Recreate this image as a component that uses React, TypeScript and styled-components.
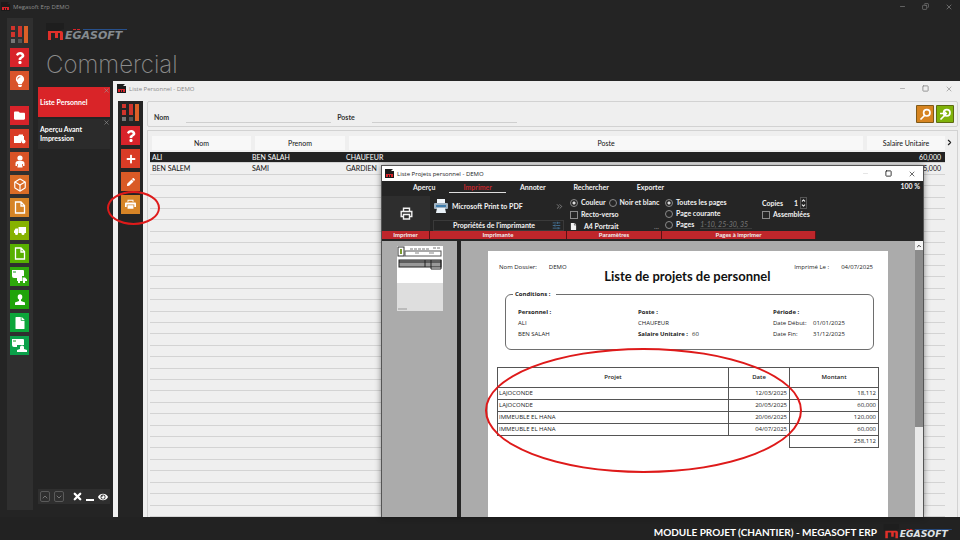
import React from "react";
import styled, { createGlobalStyle, css } from "styled-components";
import { FaQuestion, FaLightbulb, FaFile, FaPlus, FaPen, FaFolder, FaEye } from "react-icons/fa";
import { Box, ChevronDown, ChevronUp, ChevronRight, ChevronsRight, Minus, Square, X, Copy, SlidersHorizontal } from "lucide-react";

const Global = createGlobalStyle`
  * { box-sizing: border-box; }
  body { margin: 0; background: #242424; font-family: "Open Sans", "Noto Sans", sans-serif; }
  button, input { font: inherit; color: inherit; margin: 0; padding: 0; border: 0; background: none; }
  svg { display: block; flex: none; }
  h1, h2, p { margin: 0; }
`;

/* ---------- shell ---------- */
const Shell = styled.div`
  height: 100vh;
  display: grid;
  grid-template-rows: 13px minmax(0, 1fr) 23px;
  overflow: hidden;
  background: #242424;
`;
const TitleBar = styled.header<{ $tone: "dark" | "pale" | "white" }>`
  display: flex;
  align-items: center;
  gap: 3px;
  flex: none;
  white-space: nowrap;
  font-size: 6px;
  ${(p) => p.$tone === "dark" && css`color: #8d8d8d; padding: 0 7px 0 1px;`}
  ${(p) => p.$tone === "pale" && css`color: #8a8a8a; height: 15px; padding: 0 7px 0 4px;`}
  ${(p) => p.$tone === "white" && css`color: #222; height: 15px; padding: 0 7px 0 3px; background: #fff;`}
`;
const WindowButtons = styled.div`
  display: flex;
  gap: 16px;
  margin-left: auto;
  button { display: flex; }
`;
const Body = styled.div`
  display: flex;
  min-height: 0;
`;
const SideBar = styled.nav`
  width: 26px;
  margin: 5px 5px 7px 7px;
  padding: 7px 3px;
  display: flex;
  flex-direction: column;
  gap: 4px;
  background: #2f2f2f;
`;
const Tile = styled.button<{ $bg: string; $spaced?: boolean }>`
  width: 19px;
  height: 19px;
  flex: none;
  display: grid;
  place-items: center;
  color: #fff;
  background: ${(p) => p.$bg};
  margin-top: ${(p) => (p.$spaced ? "12px" : "0")};
`;
const Main = styled.div`
  flex: 1;
  min-width: 0;
  display: flex;
  flex-direction: column;
`;
const Brand = styled.div`
  height: 68px;
  padding: 10px 8px 0;
`;
const PageTitle = styled.h1`
  margin-top: 7px;
  font: 200 24px/32px Inter, sans-serif;
  color: #8c8c8c;
`;
const Work = styled.div`
  flex: 1;
  min-height: 0;
  display: flex;
`;
const TabsColumn = styled.aside`
  width: 75px;
  flex: none;
  padding: 6px 3px 13px 0;
  display: flex;
  flex-direction: column;
  gap: 2px;
  color: #fff;
`;
const OpenTab = styled.button<{ $active?: boolean }>`
  position: relative;
  text-align: left;
  height: 30px;
  padding: 0 2px;
  font: 700 7px/9px Lato, sans-serif;
  background: ${(p) => (p.$active ? "#d92428" : "#2b2b2b")};
`;
const TabClose = styled.span`
  position: absolute;
  top: 0;
  right: 0;
  color: #999;
`;
const TabTools = styled.div`
  margin-top: auto;
  display: flex;
  align-items: center;
  gap: 4px;
  height: 15px;
  padding: 0 2px;
  background: #2f2f2f;
`;
const TabTool = styled.button<{ $boxed?: boolean }>`
  display: grid;
  place-items: center;
  width: 10px;
  height: 11px;
  border: ${(p) => (p.$boxed ? "1px solid #5a5a5a" : "0")};
  border-radius: 2px;
  color: ${(p) => (p.$boxed ? "#999" : "#fff")};
  &:nth-child(3) { margin-left: 4px; }
`;
const Footer = styled.footer`
  display: flex;
  align-items: center;
  justify-content: flex-end;
  gap: 4px;
  padding: 7px 3px 0;
  color: #fff;
  background: #222;
  font: 700 10px/16px Lato, sans-serif;
`;

/* ---------- staff window ---------- */
const StaffWindow = styled.section`
  position: relative;
  flex: 1;
  min-width: 0;
  display: flex;
  flex-direction: column;
  background: #efefef;
`;
const StaffBody = styled.div`
  flex: 1;
  min-height: 0;
  display: flex;
  gap: 4px;
  padding: 5px 2px 0 5px;
`;
const ToolBar = styled.nav`
  width: 25px;
  padding: 2px 3px;
  display: flex;
  flex-direction: column;
  gap: 4px;
  background: #242424;
`;
const Ringed = styled.div`
  position: relative;
`;
const Ring = styled.span<{ $inset: string }>`
  position: absolute;
  inset: ${(p) => p.$inset};
  border: 2px solid #de1a1a;
  border-radius: 50%;
  pointer-events: none;
  z-index: 3;
`;
const StaffMain = styled.div`
  flex: 1;
  min-width: 0;
  display: flex;
  flex-direction: column;
  gap: 3px;
`;
const FilterPanel = styled.form`
  height: 26px;
  flex: none;
  display: flex;
  align-items: center;
  gap: 3px;
  padding: 0 3px 0 6px;
  border: 1px solid #d2d2d2;
  border-radius: 2px;
  font: 700 7px/9px Lato, sans-serif;
  color: #333;
`;
const FilterField = styled.label`
  display: flex;
  align-items: center;
  gap: 17px;
  padding-top: 6px;
  margin-right: 3px;
`;
const FilterInput = styled.input`
  width: 145px;
  height: 12px;
  border-bottom: 1px solid #cfcfcf;
  &:focus { outline: none; }
`;
const Actions = styled.div`
  display: flex;
  gap: 2px;
  margin-left: auto;
`;
const ActionButton = styled.button<{ $bg: string }>`
  width: 18px;
  height: 18px;
  display: grid;
  place-items: center;
  color: #fff;
  background: ${(p) => p.$bg};
  border: 1px solid rgba(70, 60, 20, 0.6);
  border-radius: 1px;
`;
const ListPanel = styled.div`
  flex: 1;
  min-height: 0;
  display: flex;
  padding: 4px 3px 0 2px;
  border: 1px solid #d2d2d2;
  border-bottom: 0;
`;
const StaffTable = styled.table`
  flex: 1;
  width: 100%;
  height: 100%;
  table-layout: fixed;
  border-collapse: collapse;
  font: 400 7px/9px Lato, sans-serif;
  color: #111;
  th { height: 17px; padding: 0 0 2px 2px; font-weight: 400; }
  th + th { padding-left: 4px; }
  th span { display: block; background: #f8f8f8; line-height: 14px; }
  td { padding: 0 4px 0 2px; border-bottom: 1px solid #d3d3d3; white-space: nowrap; }
  td + td { padding-left: 1px; }
  td:last-child { text-align: right; }
`;
const StaffRow = styled.tr<{ $selected?: boolean }>`
  ${(p) => p.$selected && css`background: #222; color: #fff;`}
`;
const ListNext = styled.button`
  width: 9px;
  height: 14px;
  display: grid;
  place-items: center;
  color: #222;
`;

/* ---------- print preview window ---------- */
const PreviewWindow = styled.section`
  position: absolute;
  top: 84px;
  left: 268px;
  right: 36px;
  bottom: 0;
  display: flex;
  flex-direction: column;
  border: 1px solid #555;
  border-width: 1px 1px 0;
  box-shadow: 0 0 6px rgba(0, 0, 0, 0.45);
  background: #ababab;
`;
const Ribbon = styled.div`
  flex: none;
  background: #252525;
  color: #f2f2f2;
  padding-bottom: 2px;
  font: 700 7px/9px Lato, sans-serif;
`;
const RibbonTabs = styled.div`
  display: flex;
  padding: 1px 3px 0 17px;
`;
const RibbonTab = styled.button<{ $active?: boolean }>`
  height: 11px;
  padding: 0 14px;
  line-height: 9px;
  border-bottom: 1px solid ${(p) => (p.$active ? "#ddd" : "transparent")};
  color: ${(p) => (p.$active ? "#c1272d" : "inherit")};
`;
const Zoom = styled.span`
  margin-left: auto;
`;
const Groups = styled.div`
  display: grid;
  grid-template-columns: 48px 137px 95px 154px;
  grid-template-rows: 37px 8px;
  padding-top: 1px;
`;
const GroupLabel = styled.div`
  background: #bf262b;
  border-right: 1px solid #5a1214;
  font-size: 6px;
  line-height: 8px;
  text-align: center;
`;
const BigButton = styled.button`
  display: grid;
  place-items: center;
  margin-top: 2px;
  background: #2e2e2e;
`;
const Group = styled.div`
  display: flex;
  flex-direction: column;
  justify-content: space-between;
  padding: 4px 3px 0;
  white-space: nowrap;
`;
const Line = styled.div<{ $gap?: number }>`
  display: flex;
  align-items: center;
  gap: ${(p) => p.$gap ?? 3}px;
`;
const PrinterName = styled.span`
  flex: 1;
`;
const PropsButton = styled.button`
  display: flex;
  align-items: center;
  height: 11px;
  padding: 0 2px;
  border: 1px solid #3a3a3a;
  color: #4a7fa8;
  span { flex: 1; color: #f2f2f2; }
`;
const Check = styled.label`
  display: flex;
  align-items: center;
  gap: 3px;
  input {
    appearance: none;
    width: 8px;
    height: 8px;
    border: 1px solid #8a8a8a;
  }
  input[type="radio"] { border-radius: 50%; }
  input[type="radio"]:checked { background: radial-gradient(circle, #ddd 0 1px, #252525 2px); }
`;
const Columns = styled.div`
  display: flex;
  justify-content: space-between;
  padding-left: 3px;
`;
const Stack = styled.div`
  display: flex;
  flex-direction: column;
  gap: 2px;
  padding-top: 4px;
`;
const CopiesStack = styled(Stack)`
  width: 54px;
  padding-top: 3px;
  gap: 1px;
`;
const RangeInput = styled.input`
  width: 52px;
  height: 9px;
  font-style: italic;
  font-weight: 400;
  border-bottom: 1px solid #3a3a3a;
  &::placeholder { color: #777; opacity: 1; }
`;
const CopiesInput = styled.input`
  width: 13px;
  height: 9px;
  text-align: right;
`;
const Spinner = styled.button`
  display: flex;
  flex-direction: column;
  border: 1px solid #555;
`;
const Faint = styled.span`
  margin-left: auto;
  color: #777;
`;
const PreviewBody = styled.div`
  flex: 1;
  min-height: 0;
  display: flex;
  overflow: hidden;
`;
const ThumbPane = styled.aside`
  width: 79px;
  padding: 5px 15px;
  border-right: 4px solid #252525;
`;
const Canvas = styled.div`
  flex: 1;
  min-width: 0;
  padding: 10px 27px 0;
`;
const ScrollTrack = styled.div`
  width: 8px;
  display: flex;
  flex-direction: column;
  background: #e9e9e9;
`;
const ScrollButton = styled.button`
  height: 9px;
  display: grid;
  place-items: center;
  background: #f4f4f4;
  color: #333;
`;
const ScrollThumb = styled.div`
  height: 64%;
  background: #8b8b8b;
`;

/* ---------- report ---------- */
const Report = styled.article`
  height: 100%;
  padding: 12px 9px 0 9px;
  background: #fff;
  color: #222;
  font-size: 6px;
  line-height: 9px;
`;
const ReportHead = styled.div`
  display: flex;
  justify-content: space-between;
  padding: 0 6px 0 2px;
  height: 27px;
`;
const ReportTitle = styled.h2`
  padding-top: 5px;
  margin-left: 14px;
  color: #111;
  font: 700 13px/16px Lato, sans-serif;
`;
const Pair = styled.div`
  display: flex;
  gap: 12px;
`;
const Conditions = styled.fieldset`
  display: grid;
  grid-template-columns: 120px 135px 1fr;
  height: 60px;
  min-width: 0;
  margin: 0 5px 17px 8px;
  padding: 9px 12px 0;
  border: 1px solid #6e6e6e;
  border-radius: 6px;
  legend { padding: 0 6px 0 2px; margin-left: -5px; font-weight: 700; }
  div p { height: 11px; }
`;
const Value = styled.span`
  margin-left: 4px;
`;
const DateRow = styled.p`
  display: grid;
  grid-template-columns: 40px 1fr;
`;
const TableHolder = styled.div`
  position: relative;
`;
const ProjectTable = styled.table`
  width: 100%;
  table-layout: fixed;
  border-collapse: collapse;
  th { height: 20px; font-weight: 600; }
  th, td { border: 1px solid #555; padding: 0 2px; }
  td { height: 12px; text-align: right; }
  td:first-child { text-align: left; padding-left: 1px; }
  tfoot td:first-child { border: 0; }
`;

/* ---------- drawings ---------- */
const Mosaic = () => (
  <svg width="19" height="19" viewBox="0 0 19 19">
    <g fill="#d0342c"><rect x="1" y="1" width="4" height="4" /><rect x="1" y="7" width="4" height="5" /><rect x="8" y="1" width="4" height="11" /></g>
    <rect x="14" y="1" width="4" height="17" fill="#dc6028" />
    <g fill="#777"><rect x="1" y="14" width="4" height="4" /><rect x="8" y="14" width="4" height="4" fill="#555" /></g>
  </svg>
);
const Logo = ({ width, height, bright }: { width: number; height: number; bright?: boolean }) => (
  <svg width={width} height={height} viewBox="0 0 84 19" overflow="visible" role="img" aria-label="Megasoft">
    <path d="M0 0H18V6L12 8H0Z" fill="#1e1e1e" />
    <path d="M2 17V8H15Q17 8 17 10V17H14V10H12V15H9V10H5V17Z" fill="#e0302a" />
    <g fill="#d8232a"><rect x="27" y="6" width="3" height="1" /><rect x="31" y="6" width="3" height="1" /></g>
    <rect x="37" y="6" width="44" height="1" fill="#27508c" />
    <text x="19" y="16" fontFamily="DejaVu Sans, sans-serif" fontSize="11" fontWeight="700" fontStyle="italic" fill={bright ? "#dfe3e6" : "#858b90"}>EGASOFT</text>
  </svg>
);
const AppMark = () => (
  <svg width="9" height="9" viewBox="0 0 9 9">
    <path d="M0 0H8L6 2H9V9H0Z" fill="#1b1b1b" />
    <path d="M1 8V5H8V8H6V6H5V8H4V6H3V8Z" fill="#d8232a" />
  </svg>
);
const PersonIcon = () => (
  <svg width="12" height="13" viewBox="0 0 12 13" fill="currentColor">
    <circle cx="6" cy="3" r="2.6" />
    <path d="M1.500 11V8.500Q1.500 6 4 6H8Q10.500 6 10.500 8.500V11H8.500V12.500H3.500V11Z" />
    <path d="M3.500 9V11M8.500 9V11" stroke="#d95326" strokeWidth="0.800" />
  </svg>
);
const BustIcon = () => (
  <svg width="12" height="12" viewBox="0 0 12 12" fill="currentColor">
    <ellipse cx="6" cy="3" rx="2.3" ry="2.7" />
    <path d="M5 5H7V7L11 8.500V11H1V8.500L5 7Z" />
  </svg>
);
const DocIcon = () => (
  <svg width="12" height="13" viewBox="0 0 12 13" fill="none" stroke="currentColor" strokeWidth="1.3">
    <path d="M1.500 1H7L10.500 4.500V12H1.500ZM7 1V5H10.500" />
  </svg>
);
const FolderPlus = () => (
  <svg width="12" height="12" viewBox="0 0 12 12" fill="currentColor">
    <path d="M0 3H4L5 1.500H9V3H10V7A2.500 2.500 0 0 0 7 10H0Z" /><circle cx="9.500" cy="8.500" r="2" />
  </svg>
);
const TruckIcon = () => (
  <svg width="14" height="10" viewBox="0 0 14 10" fill="currentColor">
    <path d="M5.500 1H13V7H5.500ZM5 2.500V7H1V5L2.500 2.500Z" /><circle cx="3.500" cy="7.500" r="1.500" /><circle cx="10" cy="7.500" r="1.500" />
  </svg>
);
const CardWith = ({ person }: { person?: boolean }) => (
  <svg width="17" height="15" viewBox="0 0 17 15" fill="currentColor">
    <path d="M1 1H12Q13 1 13 2V7H6V9H3Q1 9 1 7Z" />
    <path d="M2 3H5" stroke="#159a20" />
    {person ? <path d="M6 14V12L9 11V9Q9 7.500 11 7.500T13 9V11L16 12V14Z" /> : <path d="M6 7H11V12H6ZM11.500 8.500H14L16 10.500V12H11.500ZM7 12h2v2h-2ZM12 12h2v2h-2Z" />}
  </svg>
);
const PrinterIcon = ({ size }: { size: number }) => (
  <svg width={size} height={size} viewBox="0 0 13 13" fill="none" stroke="currentColor" strokeWidth="1.4">
    <path d="M3.500 4V1.200H9.500V4M3.500 9.500H1.200V4.500H11.800V9.500H9.500M3.500 7.500H9.500V12H3.500Z" />
  </svg>
);
const PrinterSolid = () => (
  <svg width="11" height="11" viewBox="0 0 13 12" fill="currentColor">
    <path d="M3 0.500H10V3H9V1.500H4V3H3ZM1 3.500H12Q13 3.500 13 5V9H11V6H2V9H0V5Q0 3.500 1 3.500ZM3 7H10V11H3Z" />
  </svg>
);
const PrinterColor = () => (
  <svg width="16" height="16" viewBox="0 0 16 16">
    <rect x="4" y="1" width="8" height="5" fill="#f2f6fa" /><rect x="1" y="5" width="14" height="6" rx="1" fill="#9fb2c2" />
    <rect x="3" y="7" width="10" height="2" fill="#3f7cab" /><path d="M4 10H12L13 15H3Z" fill="#e9f1f7" />
  </svg>
);
const Lens = ({ arrow }: { arrow?: boolean }) => (
  <svg width="13" height="13" viewBox="0 0 13 13" fill="none" stroke="currentColor" strokeWidth="1.700">
    <circle cx="7.800" cy="4.800" r="3.200" /><path d="M5.500 7.500L1.500 11.500" />
    {arrow && <path d="M1 5.500H7M5 3L7.500 5.500L5 8" strokeWidth="1.300" />}
  </svg>
);
const Thumbnail = () => (
  <svg width="46" height="65" viewBox="0 0 46 65" role="img" aria-label="Page 1">
    <rect width="46" height="65" fill="#fff" /><rect y="37" width="46" height="28" fill="#dedede" />
    <rect x="1" y="1" width="6" height="9" fill="#fff" stroke="#333" /><rect x="3" y="3" width="2" height="5" fill="#7a9a2e" />
    <path d="M13 3H32M36 2H44" stroke="#777" strokeDasharray="3 1" />
    <rect x="8" y="5" width="36" height="5" fill="none" stroke="#555" /><path d="M18 7H22M32 7H37" stroke="#888" />
    <rect x="2" y="14" width="42" height="7" fill="#999" stroke="#222" /><path d="M2 16H44M28 14V21M34 14V23H44V14" stroke="#222" fill="none" />
    <path d="M1 63H10" stroke="#999" />
  </svg>
);

const Controls = ({ restore, light }: { restore?: boolean; light?: boolean }) => (
  <WindowButtons>
    <button aria-label="Réduire"><Minus size={7} strokeWidth={2} opacity={light ? 0.2 : 1} /></button>
    <button aria-label="Agrandir">{restore ? <Copy size={7} transform="scale(-1 1)" /> : <Square size={7} strokeWidth={3} />}</button>
    <button aria-label="Fermer"><X size={8} strokeWidth={2} /></button>
  </WindowButtons>
);

const modules: { name: string; bg: string; icon: React.ReactNode; spaced?: boolean }[] = [
  { name: "Aide", bg: "#d8232a", icon: <FaQuestion size={12} /> },
  { name: "Astuces", bg: "#d9532a", icon: <FaLightbulb size={12} /> },
  { name: "Dossiers", bg: "#d8232a", icon: <FaFolder size={11} />, spaced: true },
  { name: "Nouveau dossier", bg: "#d93c26", icon: <FolderPlus /> },
  { name: "Personnel", bg: "#d95326", icon: <PersonIcon /> },
  { name: "Articles", bg: "#d96c26", icon: <Box size={14} strokeWidth={2} /> },
  { name: "Documents", bg: "#d68426", icon: <DocIcon /> },
  { name: "Livraisons", bg: "#86b200", icon: <TruckIcon /> },
  { name: "Devis", bg: "#58b000", icon: <DocIcon /> },
  { name: "Transport", bg: "#2fa80c", icon: <CardWith /> },
  { name: "Clients", bg: "#1fa40a", icon: <BustIcon /> },
  { name: "Factures", bg: "#0ba53a", icon: <FaFile size={12} /> },
  { name: "Comptes", bg: "#0ba04a", icon: <CardWith person /> },
];

const projects = [
  ["LAJOCONDE", "12/03/2025", "18,112"],
  ["LAJOCONDE", "20/05/2025", "60,000"],
  ["IMMEUBLE EL HANA", "20/06/2025", "120,000"],
  ["IMMEUBLE EL HANA", "04/07/2025", "60,000"],
];

const Preview = () => (
  <PreviewWindow>
    <TitleBar $tone="white"><AppMark />Liste Projets personnel - DEMO<Controls light /></TitleBar>
    <Ribbon>
      <RibbonTabs>
        {["Aperçu", "Imprimer", "Annoter", "Rechercher", "Exporter"].map((t) => (
          <RibbonTab key={t} $active={t === "Imprimer"}>{t}</RibbonTab>
        ))}
        <Zoom>100 %</Zoom>
      </RibbonTabs>
      <Groups>
        <BigButton aria-label="Imprimer"><PrinterIcon size={13} /></BigButton>
        <Group>
          <Line><PrinterColor /><PrinterName>Microsoft Print to PDF</PrinterName><ChevronsRight size={9} color="#999" /></Line>
          <PropsButton><span>Propriétés de l'imprimante</span><SlidersHorizontal size={9} /></PropsButton>
        </Group>
        <Group>
          <Line>
            <Check><input type="radio" name="color" defaultChecked />Couleur</Check>
            <Check><input type="radio" name="color" />Noir et blanc</Check>
          </Line>
          <Check><input type="checkbox" />Recto-verso</Check>
          <Line $gap={7}><FaFile size={7} />A4 Portrait<Faint>...</Faint></Line>
        </Group>
        <Columns>
          <Stack>
            <Check><input type="radio" name="pages" defaultChecked />Toutes les pages</Check>
            <Check><input type="radio" name="pages" />Page courante</Check>
            <Line $gap={6}>
              <Check><input type="radio" name="pages" />Pages</Check>
              <RangeInput aria-label="Pages à imprimer" placeholder="1-10, 25-30, 35" />
            </Line>
          </Stack>
          <CopiesStack>
            <Line $gap={2}>
              <label htmlFor="copies">Copies</label><CopiesInput id="copies" defaultValue="1" />
              <Spinner aria-label="Nombre de copies"><ChevronUp size={5} strokeWidth={5} /><ChevronDown size={5} strokeWidth={5} /></Spinner>
            </Line>
            <Check><input type="checkbox" />Assemblées</Check>
          </CopiesStack>
        </Columns>
        <GroupLabel>Imprimer</GroupLabel>
        <GroupLabel>Imprimante</GroupLabel>
        <GroupLabel>Paramètres</GroupLabel>
        <GroupLabel>Pages à imprimer</GroupLabel>
      </Groups>
    </Ribbon>
    <PreviewBody>
      <ThumbPane><Thumbnail /></ThumbPane>
      <Canvas>
        <Report>
          <ReportHead>
            <Pair><span>Nom Dossier:</span><span>DEMO</span></Pair>
            <ReportTitle>Liste de projets de personnel</ReportTitle>
            <Pair><span>Imprimé Le :</span><span>04/07/2025</span></Pair>
          </ReportHead>
          <Conditions>
            <legend>Conditions :</legend>
            <div><p><b>Personnel :</b></p><p>ALI</p><p>BEN SALAH</p></div>
            <div><p><b>Poste :</b></p><p>CHAUFEUR</p><p><b>Salaire Unitaire :</b><Value>60</Value></p></div>
            <div>
              <p><b>Période :</b></p>
              <DateRow><span>Date Début:</span><span>01/01/2025</span></DateRow>
              <DateRow><span>Date Fin:</span><span>31/12/2025</span></DateRow>
            </div>
          </Conditions>
          <TableHolder>
            <ProjectTable>
              <colgroup><col /><col width="61" /><col width="89" /></colgroup>
              <thead><tr><th>Projet</th><th>Date</th><th>Montant</th></tr></thead>
              <tbody>
                {projects.map((r, i) => <tr key={i}><td>{r[0]}</td><td>{r[1]}</td><td>{r[2]}</td></tr>)}
              </tbody>
              <tfoot><tr><td colSpan={2} /><td>258,112</td></tr></tfoot>
            </ProjectTable>
            <Ring $inset="-19px 77px -25px -12px" />
          </TableHolder>
        </Report>
      </Canvas>
      <ScrollTrack><ScrollButton aria-label="Défiler vers le haut"><ChevronUp size={6} strokeWidth={4} /></ScrollButton><ScrollThumb /></ScrollTrack>
    </PreviewBody>
  </PreviewWindow>
);

export default function App() {
  return (
    <Shell>
      <Global />
      <TitleBar $tone="dark"><AppMark />Megasoft Erp DEMO<Controls restore /></TitleBar>
      <Body>
        <SideBar>
          <Mosaic />
          {modules.map((m) => <Tile key={m.name} aria-label={m.name} $bg={m.bg} $spaced={m.spaced}>{m.icon}</Tile>)}
        </SideBar>
        <Main>
          <Brand><Logo width={84} height={19} /><PageTitle>Commercial</PageTitle></Brand>
          <Work>
            <TabsColumn>
              <OpenTab $active>Liste Personnel<TabClose><X size={7} /></TabClose></OpenTab>
              <OpenTab>Aperçu Avant<br />Impression<TabClose><X size={7} /></TabClose></OpenTab>
              <TabTools>
                <TabTool $boxed aria-label="Précédent"><ChevronUp size={8} /></TabTool>
                <TabTool $boxed aria-label="Suivant"><ChevronDown size={8} /></TabTool>
                <TabTool aria-label="Fermer tout"><X size={11} strokeWidth={5} /></TabTool>
                <TabTool aria-label="Réduire tout"><svg width="8" height="8"><rect y="6" width="8" height="2" fill="currentColor" /></svg></TabTool>
                <TabTool aria-label="Afficher"><FaEye size={10} /></TabTool>
              </TabTools>
            </TabsColumn>
            <StaffWindow>
              <TitleBar $tone="pale"><AppMark />Liste Personnel - DEMO<Controls /></TitleBar>
              <StaffBody>
                <ToolBar>
                  <Mosaic />
                  <Tile aria-label="Aide" $bg="#d8232a"><FaQuestion size={12} /></Tile>
                  <Tile aria-label="Ajouter" $bg="#d93c26"><FaPlus size={10} /></Tile>
                  <Tile aria-label="Modifier" $bg="#d95a26"><FaPen size={8} /></Tile>
                  <Ringed>
                    <Tile aria-label="Imprimer" $bg="#d68426"><PrinterSolid /></Tile>
                    <Ring $inset="-4px -20px -11px -14px" />
                  </Ringed>
                </ToolBar>
                <StaffMain>
                  <FilterPanel onSubmit={(e) => e.preventDefault()}>
                    <FilterField>Nom<FilterInput /></FilterField>
                    <FilterField>Poste<FilterInput /></FilterField>
                    <Actions>
                      <ActionButton aria-label="Rechercher" $bg="#d68420"><Lens /></ActionButton>
                      <ActionButton aria-label="Réinitialiser" $bg="#7fb20a"><Lens arrow /></ActionButton>
                    </Actions>
                  </FilterPanel>
                  <ListPanel>
                    <StaffTable>
                      <colgroup><col width="101" /><col width="94" /><col /><col width="82" /></colgroup>
                      <thead>
                        <tr>{["Nom", "Prenom", "Poste", "Salaire Unitaire"].map((h) => <th key={h}><span>{h}</span></th>)}</tr>
                      </thead>
                      <tbody>
                        <StaffRow $selected><td>ALI</td><td>BEN SALAH</td><td>CHAUFEUR</td><td>60,000</td></StaffRow>
                        <StaffRow><td>BEN SALEM</td><td>SAMI</td><td>GARDIEN</td><td>65,000</td></StaffRow>
                        {Array.from({ length: 30 }, (_, i) => <StaffRow key={i}><td colSpan={4}>&nbsp;</td></StaffRow>)}
                      </tbody>
                    </StaffTable>
                    <ListNext aria-label="Colonnes suivantes"><ChevronRight size={9} strokeWidth={3} /></ListNext>
                  </ListPanel>
                </StaffMain>
              </StaffBody>
              <Preview />
            </StaffWindow>
          </Work>
        </Main>
      </Body>
      <Footer>MODULE PROJET (CHANTIER) - MEGASOFT ERP<Logo width={76} height={16} bright /></Footer>
    </Shell>
  );
}
